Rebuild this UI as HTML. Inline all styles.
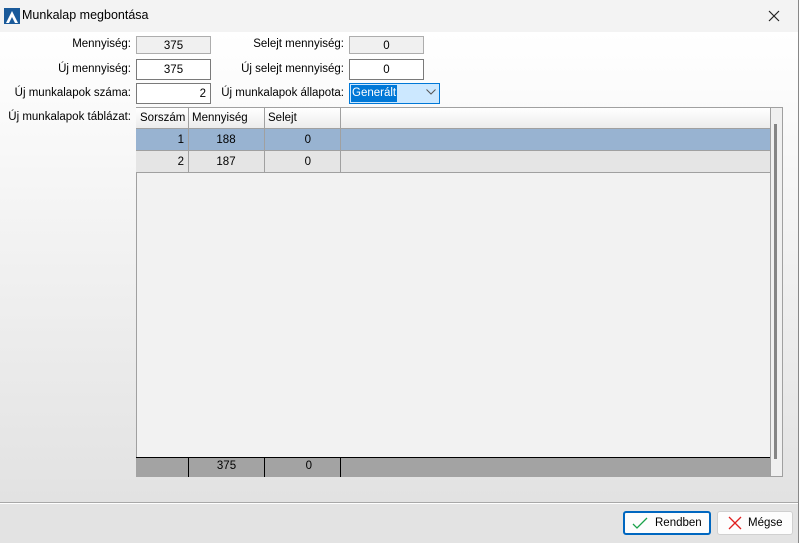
<!DOCTYPE html><html><head><style>
body{margin:0;width:799px;height:543px;overflow:hidden;font-family:"Liberation Sans",sans-serif;font-size:11.5px;color:#000;position:relative;background:#e3e3e3}
.a{position:absolute}
.title{left:0;top:0;width:798px;height:32px;background:#f3f3f3}
.main{left:0;top:32px;width:798px;height:470px;background:linear-gradient(#fff,#e2e2e2)}
.lbl{text-align:right}
.box{border:1px solid #7a7a7a;background:#fff;height:18px;line-height:18px;text-align:center;box-sizing:border-box}
.ro{background:#f0f0f0;border-color:#adadad}
.cell{position:absolute;height:22px;line-height:22px;box-sizing:border-box;border-right:1px solid #a0a0a0;padding:0 4px;white-space:nowrap}
</style></head><body>
<div class="a" style="right:0;top:0;width:1px;height:543px;background:#888"></div>
<div class="a title"></div>
<svg class="a" style="left:4px;top:8px" width="16" height="16"><rect width="16" height="16" fill="#1a5a9a"/><path d="M2 15 L8 3 L14 15 L11 15 L8 9 L5 15Z" fill="#fff"/></svg>
<div class="a" style="left:22px;top:8px;font-size:12.5px">Munkalap megbontása</div>
<svg class="a" style="left:768px;top:10px" width="12" height="12"><path d="M1 1L11 11M11 1L1 11" stroke="#222" stroke-width="1.2"/></svg>
<div class="a main"></div>
<div class="a lbl" style="left:0;width:131px;top:38px">Mennyiség:</div>
<div class="a box ro" style="left:136px;top:36px;width:75px">375</div>
<div class="a lbl" style="left:200px;width:144px;top:38px">Selejt mennyiség:</div>
<div class="a box ro" style="left:349px;top:36px;width:75px">0</div>
<div class="a lbl" style="left:0;width:131px;top:63px">Új mennyiség:</div>
<div class="a box" style="left:136px;top:59px;width:75px;height:21px;line-height:20px">375</div>
<div class="a lbl" style="left:200px;width:144px;top:63px">Új selejt mennyiség:</div>
<div class="a box" style="left:349px;top:59px;width:75px;height:21px;line-height:20px">0</div>
<div class="a lbl" style="left:0;width:131px;top:87px">Új munkalapok száma:</div>
<div class="a box" style="left:136px;top:83px;width:75px;height:21px;line-height:20px;text-align:right;padding-right:4px">2</div>
<div class="a lbl" style="left:200px;width:144px;top:87px">Új munkalapok állapota:</div>
<div class="a box" style="left:349px;top:83px;width:91px;height:21px;border-color:#0078d7;background:#cce8ff"></div>
<div class="a" style="left:351px;top:85px;height:17px;line-height:17px;background:#0078d7;color:#fff;padding:0 1px">Generált</div>
<svg class="a" style="left:426px;top:89px" width="10" height="6"><path d="M0.5 0.5L5 5L9.5 0.5" stroke="#555" fill="none"/></svg>
<div class="a lbl" style="left:0;width:131px;top:111px">Új munkalapok táblázat:</div>
<div class="a" style="left:136px;top:107px;width:647px;height:370px;border:1px solid #a0a0a0;box-sizing:border-box;background:#f2f2f2"></div>
<div class="a" style="left:136px;top:107px;width:634px;height:22px;background:linear-gradient(#fff,#ececec);border-bottom:1px solid #a0a0a0;border-top:1px solid #a0a0a0;box-sizing:border-box"></div>
<div class="cell" style="left:136px;top:107px;width:53px">Sorszám</div>
<div class="cell" style="left:188px;top:107px;width:77px">Mennyiség</div>
<div class="cell" style="left:264px;top:107px;width:77px">Selejt</div>
<div class="a" style="left:136px;top:129px;width:634px;height:22px;background:#98b3d1;border-bottom:1px solid #a0a0a0;box-sizing:border-box"></div>
<div class="cell" style="left:136px;top:129px;width:53px;text-align:right">1</div>
<div class="cell" style="left:188px;top:129px;width:77px;text-align:center">188</div>
<div class="cell" style="left:264px;top:129px;width:77px;text-align:right;padding-right:29px">0</div>
<div class="a" style="left:136px;top:151px;width:634px;height:22px;background:#e5e5e5;border-bottom:1px solid #a0a0a0;box-sizing:border-box"></div>
<div class="cell" style="left:136px;top:151px;width:53px;text-align:right">2</div>
<div class="cell" style="left:188px;top:151px;width:77px;text-align:center">187</div>
<div class="cell" style="left:264px;top:151px;width:77px;text-align:right;padding-right:29px">0</div>
<div class="a" style="left:770px;top:107px;width:12px;height:369px;border-left:1px solid #a0a0a0;border-top:1px solid #a0a0a0;box-sizing:border-box;background:#f0f0f0"></div>
<div class="a" style="left:774px;top:124px;width:3px;height:335px;background:#858585"></div>
<div class="a" style="left:136px;top:457px;width:634px;height:20px;background:#a3a3a3;border-top:1px solid #000;box-sizing:border-box"></div>
<div class="a" style="left:188px;top:457px;width:1px;height:20px;background:#000"></div>
<div class="a" style="left:264px;top:457px;width:1px;height:20px;background:#000"></div>
<div class="a" style="left:340px;top:457px;width:1px;height:20px;background:#000"></div>
<div class="a" style="left:189px;top:460px;width:75px;text-align:center">375</div>
<div class="a" style="left:265px;top:460px;width:75px;text-align:right;padding-right:28px;box-sizing:border-box">0</div>
<div class="a" style="left:0;top:502px;width:798px;height:1px;background:#a8a8a8"></div>
<div class="a" style="left:0;top:503px;width:798px;height:1px;background:#fff"></div>
<div class="a" style="left:623px;top:511px;width:88px;height:24px;border:2px solid #0067c0;border-radius:3px;background:#fdfdfd;box-sizing:border-box;line-height:20px;padding-left:30px">Rendben</div>
<svg class="a" style="left:632px;top:516px" width="16" height="14"><path d="M1 8L5 12L15 2" stroke="#1aa24a" stroke-width="1.3" fill="none"/></svg>
<div class="a" style="left:717px;top:511px;width:76px;height:24px;border:1px solid #d0d0d0;border-radius:3px;background:#fdfdfd;box-sizing:border-box;line-height:22px;padding-left:30px">Mégse</div>
<svg class="a" style="left:728px;top:516px" width="14" height="14"><path d="M1 1L13 13M13 1L1 13" stroke="#e02020" stroke-width="1.3"/></svg>
</body></html>
